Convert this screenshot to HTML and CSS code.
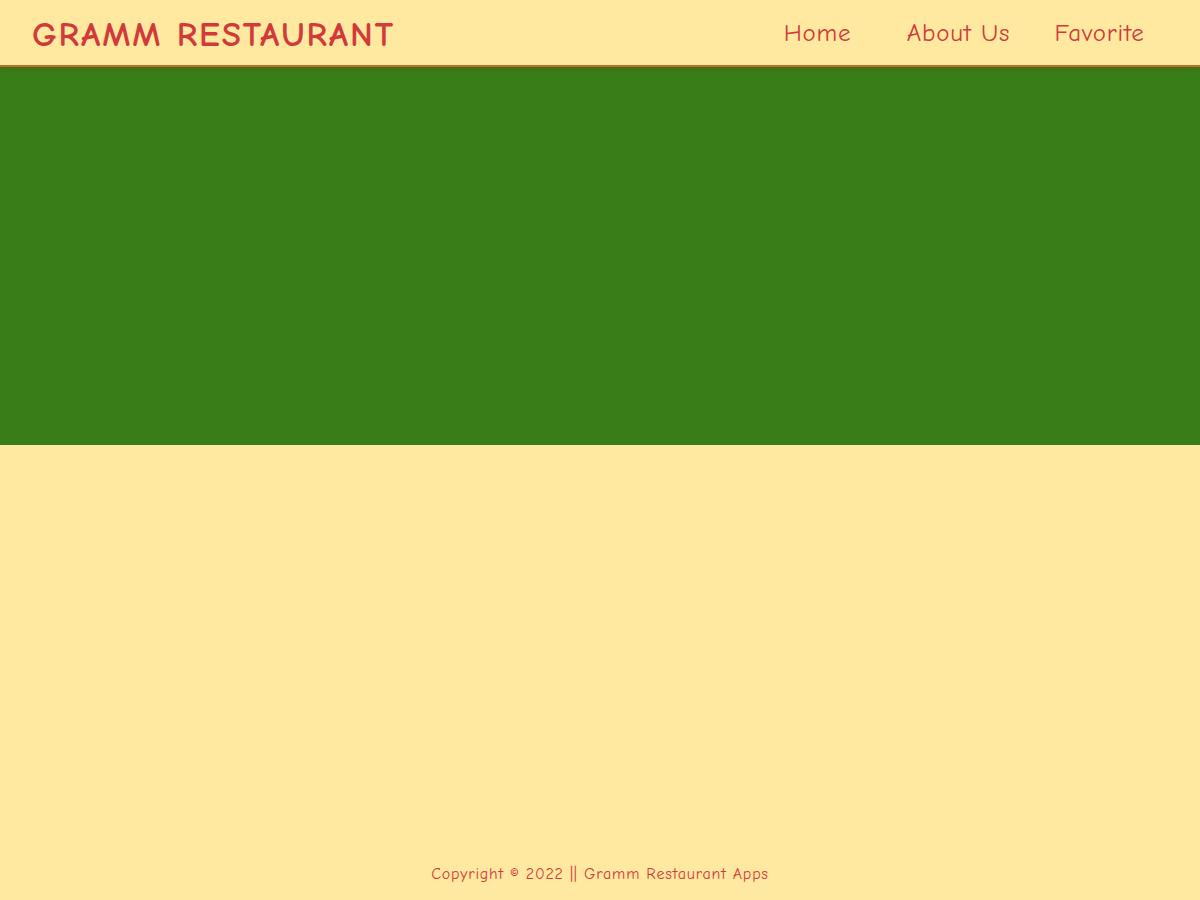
FILE: index.html
```html
<!DOCTYPE html>
<html lang="en">
<head>
<meta charset="utf-8">
<title>Gramm Restaurant</title>
<link rel="stylesheet" href="styles.css">
</head>
<body>
<div class="page">
  <header class="app-bar">
    <h1 class="brand">GRAMM RESTAURANT</h1>
    <nav class="nav">
      <a class="nav-link" href="#">Home</a>
      <a class="nav-link" href="#">About Us</a>
      <a class="nav-link" href="#">Favorite</a>
    </nav>
  </header>
  <section class="hero"></section>
  <main class="content"></main>
  <footer class="footer">Copyright © 2022 || Gramm Restaurant Apps</footer>
</div>
</body>
</html>
```
FILE: styles.css
```css
html, body {
  margin: 0;
  padding: 0;
  background: #ffe8a0;
}
.page {
  display: flex;
  flex-direction: column;
  min-height: 900px;
  font-family: "Comic Sans MS", "Comic Neue", "Open Sans", sans-serif;
  color: #d13a3a;
}
.app-bar {
  height: 65px;
  border-bottom: 2px solid #b8752a;
  box-shadow: 0 1px 3px rgba(120, 70, 10, 0.5);
  display: flex;
  align-items: center;
  justify-content: space-between;
  padding: 0 30px 0 32px;
  background: #ffe8a0;
  position: relative;
  z-index: 1;
}
.brand {
  margin: 0;
  padding-top: 3px;
  font-size: 35px;
  font-weight: 700;
  line-height: 1;
  letter-spacing: 1.9px;
}
.nav {
  display: grid;
  grid-template-columns: repeat(3, 141px);
}
.nav-link {
  text-align: center;
  color: #d13a3a;
  text-decoration: none;
  font-size: 25px;
  letter-spacing: 0.8px;
}
.hero {
  height: 378px;
  background: #387d18;
}
.content {
  flex: 1;
}
.footer {
  text-align: center;
  font-size: 16px;
  padding: 0 0 16px;
  line-height: 20px;
  letter-spacing: 0.8px;
}
```
